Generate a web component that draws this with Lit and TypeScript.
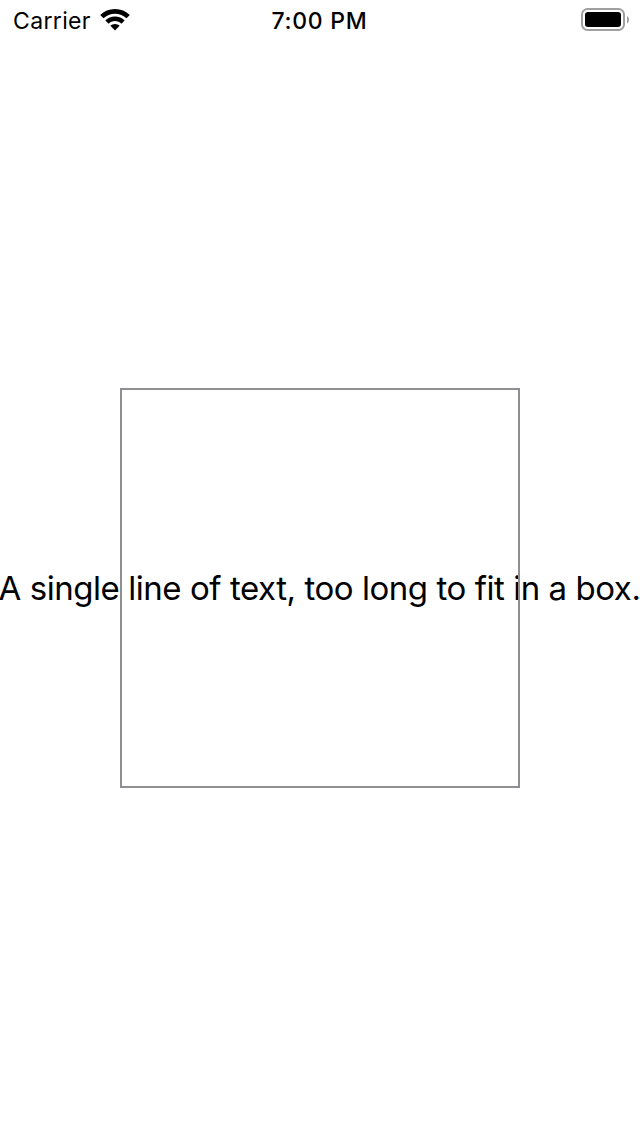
import { LitElement, html, css } from "lit";
import { customElement } from "lit/decorators.js";

@customElement("status-bar")
class StatusBar extends LitElement {
  static styles = css`
    :host {
      display: grid;
      grid-template-columns: 1fr auto 1fr;
      align-items: center;
      height: 40px;
      box-sizing: border-box;
      padding: 0 11px 0 13px;
      font: 400 23px/40px Inter, sans-serif;
      color: #000;
    }
    .left { display: flex; align-items: center; gap: 9px; }
    .carrier { letter-spacing: 0.35px; padding-top: 1px; }
    .left svg { margin-bottom: 1px; }
    .time { font-weight: 550; letter-spacing: 0.75px; padding-top: 1px; margin-left: -3px; }
    .right { display: flex; justify-content: flex-end; padding-bottom: 2px; }
    svg { display: block; }
  `;
  render() {
    return html`
      <div class="left">
        <span class="carrier">Carrier</span>
        <svg width="30" height="22" viewBox="0 0 30 22">
          <path d="M15 0C20.8 0 26 2.200 29.800 6L26.500 9.300C23.500 6.400 19.500 4.700 15 4.700S6.500 6.400 3.500 9.300L.2 6C4 2.200 9.200 0 15 0Z" />
          <path d="M15 7.400c3.800 0 7.200 1.500 9.700 4l-3.300 3.300c-1.700-1.600-3.900-2.600-6.400-2.600s-4.700 1-6.400 2.600l-3.300-3.300c2.500-2.500 5.900-4 9.700-4Z" />
          <path d="M15 15c1.800 0 3.400.7 4.600 1.800L15 21.600l-4.600-4.800C11.600 15.700 13.200 15 15 15Z" />
        </svg>
      </div>
      <span class="time">7:00 PM</span>
      <div class="right">
        <svg width="48" height="23" viewBox="0 0 48 23">
          <rect x="1" y="1" width="42" height="21" rx="5.5" fill="none" stroke="#a0a0a0" stroke-width="2" />
          <rect x="4" y="4" width="36" height="15" rx="3" />
          <path d="M46 8c1.400.8 2 2 2 3.700s-.6 2.900-2 3.700Z" fill="#a0a0a0" />
        </svg>
      </div>
    `;
  }
}

@customElement("app-root")
class AppRoot extends LitElement {
  static styles = css`
    :host {
      display: flex;
      flex-direction: column;
      height: 1136px;
      overflow: hidden;
      background: #fff;
    }
    .content { flex: 1; display: grid; place-items: center; isolation: isolate; }
    .box {
      display: flex;
      justify-content: center;
      align-items: center;
      box-sizing: border-box;
      width: 400px;
      height: 400px;
      border: 2px solid #8e8e93;
    }
    /* The label sits beneath the frame so the border stays unbroken. */
    .line {
      position: relative;
      z-index: -1;
      flex: none;
      margin-right: 1px;
      font: 400 33px/40px Inter, sans-serif;
      letter-spacing: -0.45px;
      white-space: nowrap;
      color: #000;
    }
  `;
  render() {
    return html`
      <status-bar></status-bar>
      <div class="content">
        <div class="box"><span class="line">A single line of text, too long to fit in a box.</span></div>
      </div>
    `;
  }
}
